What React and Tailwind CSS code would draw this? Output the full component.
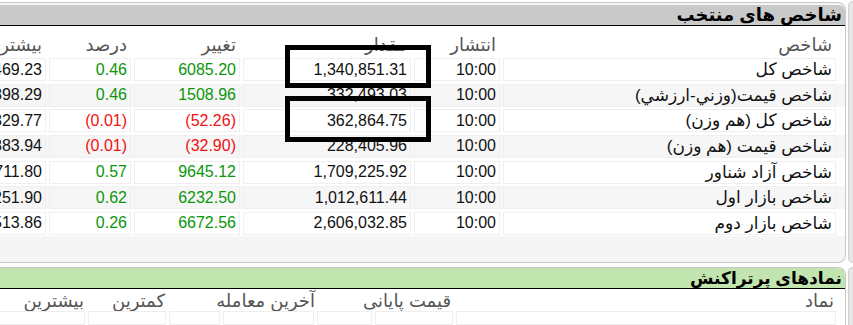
// Market index panels (RTL) — recreated with Tailwind

const cols = [333, 86, 168, 106, 82, 120];

const heads = ["شاخص", "انتشار", "مقدار", "تغییر", "درصد", "بیشترین"];

const rows = [
  ["شاخص کل", "10:00", "1,340,851.31", "6085.20", "0.46", "1,341,469.23", "up"],
  ["شاخص قیمت(وزني-ارزشي)", "10:00", "332,493.03", "1508.96", "0.46", "332,898.29", "up"],
  ["شاخص کل (هم وزن)", "10:00", "362,864.75", "(52.26)", "(0.01)", "363,329.77", "down"],
  ["شاخص قیمت (هم وزن)", "10:00", "228,405.96", "(32.90)", "(0.01)", "228,883.94", "down"],
  ["شاخص آزاد شناور", "10:00", "1,709,225.92", "9645.12", "0.57", "1,710,711.80", "up"],
  ["شاخص بازار اول", "10:00", "1,012,611.44", "6232.50", "0.62", "1,013,251.90", "up"],
  ["شاخص بازار دوم", "10:00", "2,606,032.85", "6672.56", "0.26", "2,606,513.86", "up"],
];

const heads2 = [
  ["نماد", 380],
  ["قیمت پایانی", 133],
  ["آخرین معامله", 147],
  ["کمترین", 78],
  ["بیشترین", 120],
];

const cells2 = [380, 78, 55, 91, 51, 78, 120];

function Row({ row, i }) {
  const even = i % 2 === 1;
  const tone = row[6] === "up" ? "text-[#0b960b]" : "text-[#f01010]";
  return (
    <div className={`flex h-[23px] gap-[3px] pr-[9px] ${even ? "bg-[#f6f6f6]" : "bg-white"}`}>
      {cols.map((w, c) => (
        <div
          key={c}
          style={{ width: w }}
          className={`shrink-0 flex items-center pr-[3px] border border-[#efefef] whitespace-nowrap ${
            c === 3 || c === 4 ? tone : "text-[#111]"
          }`}
        >
          {c === 0 ? (
            <span className="text-[17px] leading-none">{row[0]}</span>
          ) : (
            <span dir="ltr">{row[c]}</span>
          )}
        </div>
      ))}
    </div>
  );
}

export default function App() {
  return (
    <div className="relative w-[853px] h-[325px] overflow-hidden bg-white flex font-['Liberation_Sans','DejaVu_Sans',sans-serif] text-[16px]">
      <div className="w-[846px] shrink-0 flex flex-col" dir="rtl">
        {/* selected indices */}
        <div className="mt-[2px] h-[261px] flex flex-col border-y border-r border-[#c6c6c6] rounded-tr-[8px] rounded-br-[8px] bg-[#f5f5f5] pt-[2px] overflow-hidden">
          <div className="h-[21px] shrink-0 bg-[#c9c9c9] border-b border-black rounded-tr-[6px] flex items-center pr-[3px] font-bold text-[18px] leading-none text-black">
            شاخص های منتخب
          </div>
          <div className="bg-white pb-[1px]">
            <div className="flex h-[32px] gap-[3px] pr-[9px] pt-[5px] items-center text-[#555]">
              {cols.map((w, c) => (
                <div key={c} style={{ width: w }} className="shrink-0 pr-[4px] whitespace-nowrap text-[18px] leading-none">
                  {heads[c]}
                </div>
              ))}
            </div>
            <div className="flex flex-col gap-[2.67px]">
              {rows.map((r, i) => (
                <Row key={i} row={r} i={i} />
              ))}
            </div>
          </div>
        </div>

        {/* most traded symbols */}
        <div className="mt-[4px] flex-1 flex flex-col border-r border-t border-[#c6c6c6] rounded-tr-[8px] bg-white overflow-hidden">
          <div className="h-[21px] shrink-0 bg-[#c2e5af] border-b border-black rounded-tr-[6px] flex items-center pr-[3px] font-bold text-[17px] leading-none text-black">
            نمادهای پرتراکنش
          </div>
          <div className="flex h-[33px] gap-[3px] pr-[9px] pt-[2px] items-center text-[#555]">
            {heads2.map(([t, w], c) => (
              <div key={c} style={{ width: w }} className="shrink-0 pr-[2px] whitespace-nowrap text-[18px] leading-none">
                {t}
              </div>
            ))}
          </div>
          <div className="flex h-[23px] gap-[3px] pr-[9px]">
            {cells2.map((w, c) => (
              <div key={c} style={{ width: w }} className="shrink-0 border border-[#eeeeee]" />
            ))}
          </div>
        </div>
      </div>

      {/* neighbour panel edge */}
      <div className="ml-[2px] flex-1 flex flex-col">
        <div className="h-[262px] mt-[1px] bg-[#e6e6e6] border-l border-y border-[#cfcfcf] rounded-l-[8px]" />
        <div className="mt-[4px] flex-1 bg-[#e6e6e6] border-l border-t border-[#cfcfcf] rounded-tl-[8px]" />
      </div>

      {/* annotation boxes */}
      <div className="absolute left-[285px] top-[45px] w-[146px] h-[43px] border-[5px] border-black" />
      <div className="absolute left-[285px] top-[96px] w-[146px] h-[46px] border-[5px] border-black" />
    </div>
  );
}
